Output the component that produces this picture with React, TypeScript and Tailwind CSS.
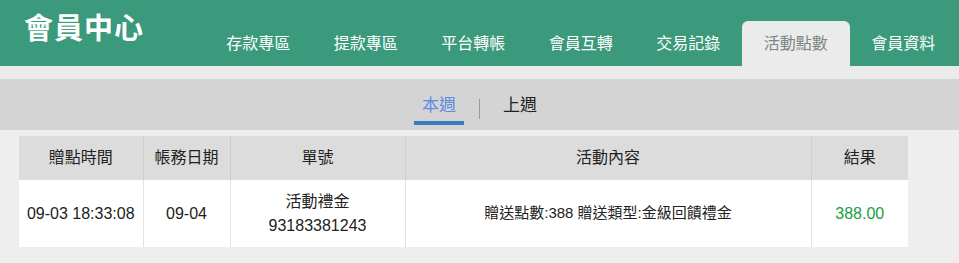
import React, { useState } from 'react';

const navItems = ['存款專區', '提款專區', '平台轉帳', '會員互轉', '交易記錄', '活動點數', '會員資料'];

const records = [
  {
    id: 1,
    time: '09-03 18:33:08',
    date: '09-04',
    type: '活動禮金',
    orderNo: '93183381243',
    content: '贈送點數:388 贈送類型:金級回饋禮金',
    result: '388.00',
  },
];

export default function App() {
  const [activeNav] = useState('活動點數');
  const [week, setWeek] = useState('this');

  return (
    <div
      className="w-[959px] h-[263px] bg-[#eeeeee] text-[#222]"
      style={{ fontFamily: '"Liberation Sans", "Noto Sans CJK TC", sans-serif' }}
    >
      {/* Header */}
      <div className="h-[66px] bg-[#3a9a7b] flex items-end justify-between">
        <h1 className="self-start mt-[9px] ml-[24px] text-[29px] font-bold text-white tracking-[1px] leading-[40px]">
          會員中心
        </h1>
        <nav className="flex items-end pr-[2px]">
          {navItems.map((item) => (
            <button
              key={item}
              className={`w-[107.5px] h-[45px] text-[16px] leading-[45px] rounded-t-[6px] ${
                item === activeNav ? 'bg-[#ebebeb] text-[#7b8884]' : 'text-white'
              }`}
            >
              {item}
            </button>
          ))}
        </nav>
      </div>

      <div className="h-[13px] bg-[#ebebeb]" />

      {/* Week tabs */}
      <div className="h-[51px] bg-[#d4d4d4] flex justify-center items-start">
        <button
          onClick={() => setWeek('this')}
          className={`mt-[12px] w-[50px] h-[34px] text-[17px] border-b-4 ${
            week === 'this' ? 'text-[#5a8de0] border-[#3a7bbf]' : 'text-[#222] border-transparent'
          }`}
        >
          本週
        </button>
        <div className="mt-[20px] mx-[15px] w-px h-[20px] bg-[#999]" />
        <button
          onClick={() => setWeek('last')}
          className={`mt-[12px] w-[50px] h-[34px] text-[17px] border-b-4 ${
            week === 'last' ? 'text-[#5a8de0] border-[#3a7bbf]' : 'text-[#222] border-transparent'
          }`}
        >
          上週
        </button>
      </div>

      {/* Table */}
      <table className="mt-[6px] ml-[19px] w-[889px] border-collapse text-[16px] text-center table-fixed">
        <colgroup>
          <col className="w-[124px]" />
          <col className="w-[87px]" />
          <col className="w-[175px]" />
          <col className="w-[406px]" />
          <col className="w-[97px]" />
        </colgroup>
        <thead>
          <tr className="h-[44px] bg-[#dcdcdc]">
            <th className="font-normal border-r border-[#cdcdcd]">贈點時間</th>
            <th className="font-normal border-r border-[#cdcdcd]">帳務日期</th>
            <th className="font-normal border-r border-[#cdcdcd]">單號</th>
            <th className="font-normal border-r border-[#cdcdcd]">活動內容</th>
            <th className="font-normal">結果</th>
          </tr>
        </thead>
        <tbody>
          {records.map((r) => (
            <tr key={r.id} className="h-[67px] bg-white">
              <td className="border-r border-[#e2e2e2]">{r.time}</td>
              <td className="border-r border-[#e2e2e2]">{r.date}</td>
              <td className="border-r border-[#e2e2e2] leading-[24px]">
                <div>{r.type}</div>
                <div>{r.orderNo}</div>
              </td>
              <td className="border-r border-[#e2e2e2] text-[15px]">{r.content}</td>
              <td className="text-[#1a9f3f]">{r.result}</td>
            </tr>
          ))}
        </tbody>
      </table>
    </div>
  );
}
